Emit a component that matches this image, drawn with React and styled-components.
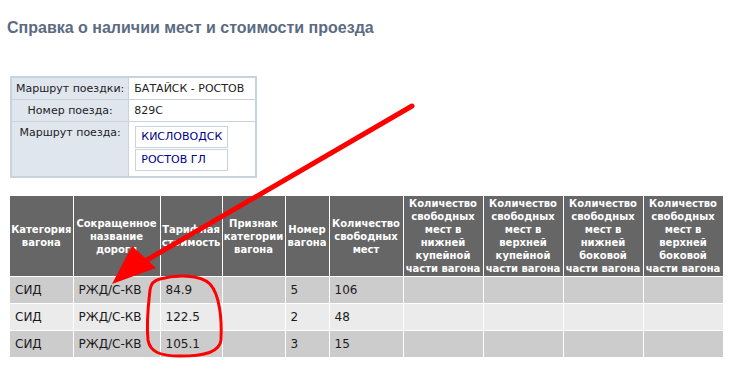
import React from "react";
import styled, { createGlobalStyle } from "styled-components";

const GlobalStyle = createGlobalStyle`
    body {
        margin: 0;
        background: #fff;
        font-family: "DejaVu Sans", Verdana, sans-serif;
    }
`

const Page = styled.div`
    position: relative;
    width: 745px;
    height: 373px;
    padding: 19px 0 0 7px;
    box-sizing: border-box;
    overflow: hidden;
`
const Title = styled.h1`
    margin: 0 0 39px;
    font-family: "Liberation Sans", Arial, sans-serif;
    font-size: 16px;
    font-weight: bold;
    color: #5b6b82;
`
const InfoTable = styled.table`
    margin-left: 3px;
    border-collapse: collapse;
    border: 2px solid #c9d3dd;
    font-size: 11px;
    color: #222;
`
const InfoLabel = styled.td`
    background: #dfe6ee;
    border: 1px solid #c9d3dd;
    padding: 0 4px;
    height: 21px;
    width: 108px;
    text-align: center;
    vertical-align: ${p => (p.$top ? "top" : "middle")};
    padding-top: ${p => (p.$top ? "4px" : "0")};
    white-space: nowrap;
`
const InfoValue = styled.td`
    border: 1px solid #c9d3dd;
    padding: 0 5px;
    height: 21px;
    white-space: nowrap;
`
const Stations = styled.div`
    display: flex;
    flex-direction: column;
    gap: 1px;
    padding: 4px 22px 5px 1px;
`
const Station = styled.div`
    border: 1px solid #c9d3dd;
    color: #00008b;
    padding: 0 5px;
    height: 20px;
    line-height: 20px;
`
const MainTable = styled.table`
    margin: 18px 0 0 3px;
    border-collapse: collapse;
    table-layout: fixed;
    width: 713px;
    font-size: 12px;
`
const Th = styled.th`
    background: #666;
    color: #fff;
    font-size: 10px;
    font-weight: bold;
    line-height: 13px;
    height: 80px;
    padding: 0 1px;
    border: 1px solid #fff;
    border-top: none;
    text-align: center;
    vertical-align: middle;
    &:first-child { border-left: none; }
`
const Row = styled.tr`
    background: ${p => (p.$even ? "#ebebeb" : "#cccccc")};
`
const Td = styled.td`
    height: 26px;
    padding: 0 5px;
    border: 1px solid #fff;
    color: #1a1a1a;
    white-space: nowrap;
    &:first-child { border-left: none; }
`
const Markup = styled.svg`
    position: absolute;
    left: 0;
    top: 0;
    pointer-events: none;
`

const widths = [63, 87, 62, 63, 44, 74, 80, 80, 80, 80]
const headers = [
    "Категория вагона",
    "Сокращенное название дороги",
    "Тарифная стоимость",
    "Признак категории вагона",
    "Номер вагона",
    "Количество свободных мест",
    "Количество свободных мест в нижней купейной части вагона",
    "Количество свободных мест в верхней купейной части вагона",
    "Количество свободных мест в нижней боковой части вагона",
    "Количество свободных мест в верхней боковой части вагона",
]
const rows = [
    ["СИД", "РЖД/С-КВ", "84.9", "", "5", "106"],
    ["СИД", "РЖД/С-КВ", "122.5", "", "2", "48"],
    ["СИД", "РЖД/С-КВ", "105.1", "", "3", "15"],
]

function App() {
    return (
        <Page>
            <GlobalStyle />
            <Title>Справка о наличии мест и стоимости проезда</Title>
            <InfoTable>
                <tbody>
                    <tr>
                        <InfoLabel>Маршрут поездки:</InfoLabel>
                        <InfoValue>БАТАЙСК - РОСТОВ</InfoValue>
                    </tr>
                    <tr>
                        <InfoLabel>Номер поезда:</InfoLabel>
                        <InfoValue>829С</InfoValue>
                    </tr>
                    <tr>
                        <InfoLabel $top>Маршрут поезда:</InfoLabel>
                        <InfoValue>
                            <Stations>
                                <Station>КИСЛОВОДСК</Station>
                                <Station>РОСТОВ ГЛ</Station>
                            </Stations>
                        </InfoValue>
                    </tr>
                </tbody>
            </InfoTable>
            <MainTable>
                <colgroup>
                    {widths.map((w, i) => <col key={i} style={{ width: w }} />)}
                </colgroup>
                <thead>
                    <tr>
                        {headers.map((h, i) => <Th key={i}>{h}</Th>)}
                    </tr>
                </thead>
                <tbody>
                    {rows.map((r, i) => (
                        <Row key={i} $even={i % 2 === 1}>
                            {widths.map((_, j) => <Td key={j}>{r[j] || ""}</Td>)}
                        </Row>
                    ))}
                </tbody>
            </MainTable>
            <Markup width="745" height="373" viewBox="0 0 745 373">
                <line x1="412" y1="106" x2="140" y2="264" stroke="#f00" strokeWidth="5" strokeLinecap="round" />
                <polygon points="112,284 132,246 156,268" fill="#f00" />
                <path
                    d="M160 279 C175 275 200 274 210 284 C220 295 222 320 221 340 C220 352 205 356 180 356 C160 356 150 352 148 340 C146 320 149 300 150 290 C151 283 155 280 160 279 Z"
                    fill="none"
                    stroke="#f00"
                    strokeWidth="3"
                />
            </Markup>
        </Page>
    )
}

export default App
